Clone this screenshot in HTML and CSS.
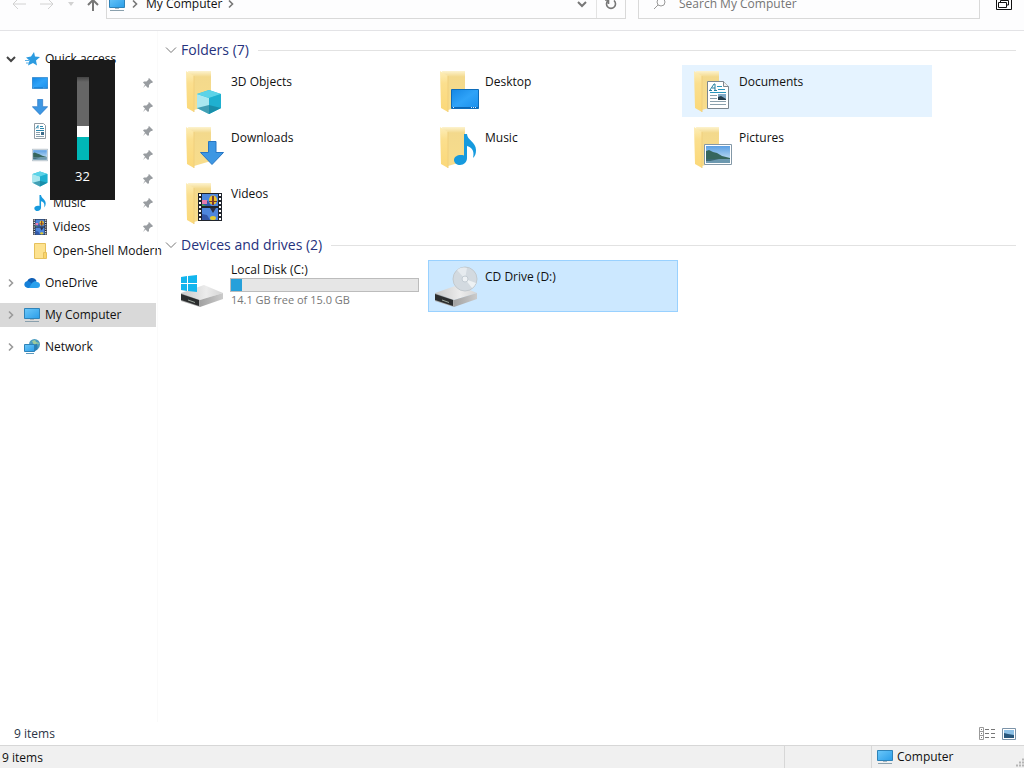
FILE: index.html
```html
<!DOCTYPE html>
<html lang="en">
 <head>
   <title>My Computer</title>
   <meta charset="utf-8"/>
   <link rel="stylesheet" href="styles.css">
 </head>

 <body>
   <!-- shared icons -->
   <svg class="sprite" aria-hidden="true">
      <defs>
         <linearGradient id="gScreen" x1="0" y1="0" x2="1" y2="1">
            <stop offset="0" stop-color="#6cc8fa"/><stop offset="1" stop-color="#2a9de8"/>
         </linearGradient>
         <linearGradient id="gBack" x1="0" y1="0" x2="0" y2="1">
            <stop offset="0" stop-color="#fdf3cf"/><stop offset="0.15" stop-color="#f3d98c"/><stop offset="1" stop-color="#f8dd8c"/>
         </linearGradient>
         <linearGradient id="gFlap" x1="0" y1="0" x2="0" y2="1">
            <stop offset="0" stop-color="#fdeeb9"/><stop offset="0.3" stop-color="#fbdf8e"/><stop offset="1" stop-color="#fbd878"/>
         </linearGradient>
         <linearGradient id="gDesk" x1="0" y1="0" x2="1" y2="1">
            <stop offset="0" stop-color="#1487e4"/><stop offset="0.5" stop-color="#2fa3f8"/><stop offset="1" stop-color="#1a8fec"/>
         </linearGradient>
         <linearGradient id="gTop" x1="0" y1="0" x2="1" y2="0">
            <stop offset="0" stop-color="#c9c9c9"/><stop offset="0.6" stop-color="#ececec"/><stop offset="1" stop-color="#d4d4d4"/>
         </linearGradient>
         <linearGradient id="gSide" x1="0" y1="0" x2="1" y2="0">
            <stop offset="0" stop-color="#a2a2a2"/><stop offset="1" stop-color="#cbcbcb"/>
         </linearGradient>
         <linearGradient id="gSky" x1="0" y1="0" x2="0" y2="1">
            <stop offset="0" stop-color="#5b9fe3"/><stop offset="1" stop-color="#d7ecf8"/>
         </linearGradient>
      </defs>
      <symbol id="folder" viewBox="0 0 48 48">
         <path d="M8 4h23v34l-17 5z" fill="url(#gBack)"/>
         <path d="M6 4l8 5v36l-7-4z" fill="url(#gFlap)"/>
         <path d="M14 9v36" stroke="#f0cf7c" fill="none"/>
      </symbol>
      <symbol id="cube" viewBox="0 0 26 24">
         <path d="M13 0l12 4v14l-12 6L1 18V4z" fill="#2cc0d8"/>
         <path d="M1 4l12 4v16L1 18z" fill="#a9e8f0"/>
         <path d="M13 0l12 4-12 4L1 4z" fill="#5cd3e8"/>
         <path d="M13 8l12-4v14l-12 6z" fill="#1fb0d0"/>
         <path d="M1 18l12-3 12 3-12 6z" fill="#17809a" opacity=".7"/>
      </symbol>
      <symbol id="arrow" viewBox="0 0 24 24">
         <path d="M8.500 .5h7.500v11h7.500L12 23.500 .5 11.500h8z" fill="#3d97e3" stroke="#2776c4"/>
      </symbol>
      <symbol id="film" viewBox="0 0 24 28">
         <path d="M0 0h24v28H0z" fill="#20242c"/>
         <path d="M4 1h16v12H4zM4 15h16v12H4z" fill="#4d86dc"/>
         <path d="M4 8h6l3 5H4zM4 21l5 1 3 5H4z" fill="#3358a8"/>
         <path d="M4 7h5v4H4z" fill="#e77cae"/>
         <ellipse cx="15" cy="7" rx="4" ry="4.500" fill="#edc32b"/><path d="M14 3h2v9h-2zM11 8h8v1h-8z" fill="#7b3a2c"/>
         <path d="M12 15h6l-3 5z" fill="#2c3047"/><ellipse cx="15" cy="25" rx="3" ry="2" fill="#e2ca32"/>
         <path d="M4 11l4 2H4z" fill="#46a846"/>
         <path d="M2 1v27M22 1v27" stroke="#fff" stroke-width="2" stroke-dasharray="2 2"/>
      </symbol>
      <symbol id="desk" viewBox="0 0 28 20">
         <path d="M.5 .5h27v19H.5z" fill="url(#gDesk)" stroke="#0d6cba"/>
         <path d="M1 18.500h26" stroke="#0b66b5"/><path d="M2 18.500h2M20 18.500h6" stroke="#d4edff" stroke-dasharray="1 1"/>
      </symbol>
      <symbol id="note" viewBox="0 0 22 31">
         <path d="M10 0h3c0 6 9 8 9 16 0 4-1 6-3 8 2-8-2-11-6-12v12c0 4-3 7-7 7-3 0-6-2-6-5s3-5 7-5c1 0 2 0 3 .5z" fill="#169ade"/>
      </symbol>
      <symbol id="doc" viewBox="0 0 22 28">
         <path d="M.5 .5h16l5 5v22H.5z" fill="#fff" stroke="#7b868f"/>
         <path d="M16.500 .5v5h5" fill="#eee" stroke="#7b868f"/>
         <path d="M3 9l4-6h1v6M5 7h3M2 9.500h3M7 9.500h3" stroke="#237fa0" fill="none"/>
         <path d="M10 5.500h5M11 8.500h7M3 11.500h16" stroke="#2995bc"/>
         <path d="M3 14.500h7M3 17.500h7M3 20.500h16M3 23.500h16" stroke="#8aa0ad"/>
         <path d="M11 13h8v6h-8z" fill="#7fa9c6"/><path d="M11 16l3-1 5 3v1h-8z" fill="#243d4c"/>
      </symbol>
      <symbol id="photo" viewBox="0 0 28 21">
         <path d="M.5 .5h27v20H.5z" fill="#fff" stroke="#8398a7"/>
         <path d="M2 2h24v17H2z" fill="url(#gSky)"/>
         <path d="M2 7l3-1 4 2 4 1 5 3 8 2v1H2z" fill="#36665d"/>
         <path d="M2 15h24v4H2z" fill="#6c98af"/><path d="M2 15l13 0-9 2H2z" fill="#3b6771"/>
      </symbol>
      <symbol id="pc" viewBox="0 0 16 16">
         <path d="M.5 1.500h15v10H.5z" fill="url(#gScreen)" stroke="#2f83b8"/>
         <path d="M6 12.500h4" stroke="#a7b6bf"/><path d="M1 14.500h14" stroke="#8aa0ad"/>
      </symbol>
      <symbol id="pin" viewBox="0 0 12 12">
         <path d="M7 1l4 4-1 1-1 0-2 2 0 2-1 1-2.500-2.500L1 11l2-3.500L1 5.500l1-1h2.500l2-2V1.500z" fill="#999da1"/>
      </symbol>
      <symbol id="chevR" viewBox="0 0 10 10"><path d="M3 1.500l3.500 3.500L3 8.500" fill="none" stroke="currentColor" stroke-width="1.600"/></symbol>
      <symbol id="chevD" viewBox="0 0 10 10"><path d="M1 3l4 4 4-4" fill="none" stroke="currentColor" stroke-width="2"/></symbol>
      <symbol id="thinD" viewBox="0 0 12 12"><path d="M1 3.500l5 5 5-5" fill="none" stroke="currentColor"/></symbol>
      <symbol id="drive" viewBox="0 0 48 48">
         <path d="M1 31l23-8 19 8-23 7z" fill="url(#gTop)"/>
         <path d="M20 38l23-7v6l-23 8z" fill="url(#gSide)"/>
         <path d="M1 31l19 7v7L1 39z" fill="#a9a9a9"/>
         <path d="M1 32l18 6v6L1 38z" fill="#2b2d2e"/>
         <path d="M8 38l7 2.500" stroke="#9aa59b"/>
      </symbol>
   </svg>

   <header class="toolbar">
      <div class="nav_btns">
         <button class="off" aria-label="Back"><svg width="14" height="12"><path d="M14 6H1M6 1L1 6l5 5" fill="none" stroke="currentColor"/></svg></button>
         <button class="off" aria-label="Forward"><svg width="14" height="12"><path d="M0 6h13M8 1l5 5-5 5" fill="none" stroke="currentColor"/></svg></button>
         <button class="off" aria-label="Recent locations"><svg width="6" height="4"><path d="M0 0h6L3 4z" fill="currentColor"/></svg></button>
         <button class="up" aria-label="Up"><svg width="12" height="13"><path d="M6 13V2M1 7l5-5 5 5" fill="none" stroke="currentColor" stroke-width="2"/></svg></button>
      </div>
      <div class="address">
         <svg class="ico16"><use href="#pc"/></svg>
         <svg class="chev"><use href="#chevR"/></svg>
         <a href="#">My Computer</a>
         <svg class="chev"><use href="#chevR"/></svg>
         <button class="drop" aria-label="Previous locations"><svg class="chev"><use href="#chevD"/></svg></button>
         <button class="refresh" aria-label="Refresh"><svg width="12" height="12"><path d="M3 2.500A4.500 4.500 0 1 0 9 2.500M3.500 6V2H0" fill="none" stroke="currentColor" stroke-width="1.600"/></svg></button>
      </div>
      <label class="search">
         <svg width="14" height="14"><circle cx="8" cy="5" r="4" fill="none" stroke="currentColor"/><path d="M5 8l-4 4" stroke="currentColor"/></svg>
         <input type="text" placeholder="Search My Computer" aria-label="Search My Computer">
      </label>
      <button class="restore" aria-label="Restore"><svg width="16" height="16"><path d="M.5 2v13.500h15V2M2.500 8.500h8v5h-8zM4.500 8V6.500h8V11h-2" fill="none" stroke="#111"/></svg></button>
   </header>

   <div class="wrap">
      <nav class="sidebar">
         <ul>
            <li><a href="#"><svg class="chev dark"><use href="#chevD"/></svg><svg class="ico16" viewBox="0 0 16 16"><path d="M10 1l1 4.500 5 .5-4 3.500 1 5-4-2.500-5 2.500 1.500-5L2 6.500l5-1z" fill="#2c9be0"/><path d="M1 9.500h4M2 12h3" stroke="#5bb0e6"/></svg>Quick access</a>
               <ul class="sub">
                  <li><a href="#" aria-label="Desktop"><svg class="ico16" viewBox="0 0 28 28"><use href="#desk" y="3" width="28" height="22"/></svg><svg class="pin"><use href="#pin"/></svg></a></li>
                  <li><a href="#" aria-label="Downloads"><svg class="ico16"><use href="#arrow"/></svg><svg class="pin"><use href="#pin"/></svg></a></li>
                  <li><a href="#" aria-label="Documents"><svg class="ico16" viewBox="0 0 16 16"><path d="M2.500 .5h9l2 2v13h-11z" fill="#fff" stroke="#8f9aa3"/><path d="M4 5.500l2-3v3M8 3.500h3M8 5.500h4M4 7.500h8" stroke="#2b86ad" fill="none"/><path d="M4 9.500h4M4 11.500h4M4 13.500h8" stroke="#8aa0ad"/><path d="M9 9h3v3H9z" fill="#3f6c8a"/></svg><svg class="pin"><use href="#pin"/></svg></a></li>
                  <li><a href="#" aria-label="Pictures"><svg class="ico16"><use href="#photo"/></svg><svg class="pin"><use href="#pin"/></svg></a></li>
                  <li><a href="#" aria-label="3D Objects"><svg class="ico16"><use href="#cube"/></svg><svg class="pin"><use href="#pin"/></svg></a></li>
                  <li><a href="#"><svg class="ico16"><use href="#note"/></svg>Music<svg class="pin"><use href="#pin"/></svg></a></li>
                  <li><a href="#"><svg class="ico16"><use href="#film"/></svg>Videos<svg class="pin"><use href="#pin"/></svg></a></li>
                  <li><a href="#"><svg class="ico16" viewBox="0 0 16 16"><path d="M2.500 .5h11v15h-11z" fill="#fde28f" stroke="#e6c15c"/><path d="M11.500 9.500h3v6h-3z" fill="#fbd56b" stroke="#e6c15c"/></svg>Open-Shell Modern</a></li>
               </ul>
            </li>
            <li><a href="#"><svg class="chev"><use href="#chevR"/></svg><svg class="ico16" viewBox="0 0 16 16"><path d="M3 7a5 5 0 0 1 9.500-1l-4 5z" fill="#0f5fb5"/><path d="M4 13a3.500 3.500 0 1 1 1-6.800L13 13z" fill="#1580d8"/><path d="M5 13l3-5c2-2 4-2 5-1 2 0 3 1.500 3 3 0 2-1 3-3 3z" fill="#2aa0ec"/></svg>OneDrive</a></li>
            <li class="on"><a href="#"><svg class="chev"><use href="#chevR"/></svg><svg class="ico16"><use href="#pc"/></svg>My Computer</a></li>
            <li><a href="#"><svg class="chev"><use href="#chevR"/></svg><svg class="ico16" viewBox="0 0 16 16"><circle cx="10.500" cy="5.500" r="5.500" fill="#4b9cc0"/><path d="M8 2l3-1 1 2 3 1-2 3-3-1z" fill="#9ecb9c"/><path d="M.5 5.500h10v7H.5z" fill="url(#gScreen)" stroke="#2f83b8"/><path d="M10.500 5.500l3-1v6l-3 2z" fill="#2b7fb4"/><path d="M2 14.500h8" stroke="#5b9abf"/></svg>Network</a></li>
         </ul>
      </nav>

      <main class="content">
         <section class="group">
            <h2><svg class="thin"><use href="#thinD"/></svg>Folders (7)</h2>
            <div class="tiles">
               <a class="tile" href="#"><svg class="ico48"><use href="#folder"/><use href="#cube" x="16" y="23" width="26" height="24"/></svg><span>3D Objects</span></a>
               <a class="tile" href="#"><svg class="ico48"><use href="#folder"/><use href="#desk" x="17" y="22" width="28" height="20"/></svg><span>Desktop</span></a>
               <a class="tile hover" href="#"><svg class="ico48"><use href="#folder"/><use href="#doc" x="19" y="14" width="22" height="28"/></svg><span>Documents</span></a>
               <a class="tile" href="#"><svg class="ico48"><use href="#folder"/><use href="#arrow" x="20" y="18" width="24" height="24"/></svg><span>Downloads</span></a>
               <a class="tile" href="#"><svg class="ico48"><use href="#folder"/><use href="#note" x="20" y="11" width="22" height="31"/></svg><span>Music</span></a>
               <a class="tile" href="#"><svg class="ico48"><use href="#folder"/><use href="#photo" x="16" y="21" width="28" height="21"/></svg><span>Pictures</span></a>
               <a class="tile" href="#"><svg class="ico48"><use href="#folder"/><use href="#film" x="18" y="14" width="24" height="28"/></svg><span>Videos</span></a>
            </div>
         </section>
         <section class="group">
            <h2><svg class="thin"><use href="#thinD"/></svg>Devices and drives (2)</h2>
            <div class="tiles">
               <a class="tile disk" href="#">
                  <svg class="ico48"><use href="#drive"/><path d="M1 15l6-1v7H1zM8 14l9-1v8H8zM1 22h6v7l-6-1zM8 22h9v8l-9-1z" fill="#12b5ee"/></svg>
                  <div class="info">
                     <span id="diskName">Local Disk (C:)</span>
                     <div class="bar" role="meter" aria-labelledby="diskName" aria-valuenow="6" aria-valuemin="0" aria-valuemax="100"><i style="width:6%"></i></div>
                     <small>14.1 GB free of 15.0 GB</small>
                  </div>
               </a>
               <a class="tile select" href="#"><svg class="ico48"><use href="#drive"/><circle cx="31" cy="17" r="12" fill="#d3dae0" stroke="#c2c9ce"/><path d="M31 17L23 8a12 12 0 0 1 10-2z" fill="#e6ebef"/><path d="M31 17l7 9a12 12 0 0 0 4-5z" fill="#eef2f4"/><circle cx="31" cy="17" r="3" fill="#eef2f5" stroke="#c3ccd3"/></svg><span>CD Drive (D:)</span></a>
            </div>
         </section>
      </main>
   </div>

   <div class="count">
      <span>9 items</span>
      <button aria-label="Details view"><svg width="16" height="13"><path d="M.5 .5h4v12h-4zM.5 4.500h4M.5 8.500h4" fill="none" stroke="#9a9a9a"/><path d="M2 2.500h1M2 6.500h1M2 10.500h1M6 2.500h4M12 2.500h4M6 6.500h4M12 6.500h4M6 10.500h4M12 10.500h4" stroke="#777"/></svg></button>
      <button aria-label="Large icons view"><svg width="14" height="12" viewBox="0 0 14 12"><path d="M.5 .5h13v11H.5z" fill="#fff" stroke="#7b93a8"/><path d="M2 2h10v8H2z" fill="#8cc0e6"/><path d="M2 5l4 1 6 1v3H2z" fill="#28577c"/></svg></button>
   </div>

   <footer class="status">
      <span class="left">9 items</span>
      <span class="mid"></span>
      <span class="zone"><svg class="ico16"><use href="#pc"/></svg>Computer</span>
      <svg class="grip" width="10" height="10"><path d="M8 1.500h2M5 4.500h2M8 4.500h2M2 7.500h2M5 7.500h2M8 7.500h2" stroke="#b5b5b5" stroke-width="2"/></svg>
   </footer>

   <!-- volume popup -->
   <div class="volume">
      <input type="range" id="vol" min="0" max="100" value="32" aria-label="Volume">
      <output for="vol">32</output>
   </div>
 </body>
</html>
```
FILE: styles.css
```css
/*####### reset #######*/
*{margin:0; padding:0; box-sizing:border-box;}
ul{list-style:none;}
a{color:inherit; text-decoration:none;}
button,input{font:inherit; color:inherit; border:0; background:none;}
svg{display:block; flex:none;}

body{display:flex; flex-direction:column; height:100vh; overflow:hidden; background-color:#fff; color:#111; font:12px/16px "Open Sans","Noto Sans",sans-serif;}
.sprite{position:absolute; width:0; height:0;}
.ico16{width:16px; height:16px;}
.ico48{width:48px; height:48px;}
.chev{width:10px; height:10px; color:#9a9a9a;}
.dark{color:#444;}

/*####### toolbar #######*/
.toolbar{display:flex; align-items:flex-end; flex:none; height:31px; padding:0 12px 11px; border-bottom:1px solid #e3e3e6; background-color:#fdfdfe;}
.nav_btns{display:flex; align-items:center; height:30px; width:94px; gap:14px; color:#777;}
.nav_btns .off{color:#d2d2d2;}
.nav_btns .up{margin-left:-1px;}
.address{display:flex; align-items:center; flex:1; height:30px; padding-left:2px; border:1px solid #d9d9d9;}
.address a{margin:0 6px;}
.address .chev{margin-left:5px; color:#777;}
.address a + .chev{margin-left:-2px;}
.address button{display:flex; align-items:center; justify-content:center; height:28px; width:29px; color:#777;}
.address .drop{margin-left:auto;}
.address .drop .chev{margin:0;}
.address .refresh{border-left:1px solid #e3e3e3;}
.search{display:flex; align-items:center; flex:0 1 342px; height:30px; margin-left:12px; padding-left:14px; gap:12px; border:1px solid #d9d9d9; color:#999;}
.search input{flex:1; min-width:0; outline:0;}
.search input::placeholder{color:#757575; opacity:1;}
.restore{height:34px; margin-left:16px;}

/*####### sidebar #######*/
.wrap{display:flex; flex:1; min-height:0;}
.sidebar{width:157px; flex:none; padding-top:16px;}
.sidebar a{display:flex; align-items:center; height:24px; padding-left:6px; white-space:nowrap;}
.sidebar .chev{margin-right:8px;}
.sidebar .ico16{margin-right:5px;}
.sidebar .sub a{padding-left:32px; padding-right:3px;}
.sidebar .pin{width:12px; height:12px; margin-left:auto;}
.sidebar > ul > li{margin-bottom:8px;}
.sidebar .on{margin-right:1px; background-color:#d9d9d9;}

/*####### content #######*/
.content{flex:1; padding:4px 8px 0 9px; border-left:1px solid #fafafa;}
.group{margin-bottom:1px;}
.group h2{display:flex; align-items:center; height:30px; color:#26327d; font-size:14px; font-weight:400;}
.group h2:after{content:""; flex:1; height:1px; margin-left:9px; background-color:#e2e2e2;}
.thin{width:12px; height:12px; margin:0 4px 0 -2px; color:#777;}
.tiles{display:grid; grid-template-columns:repeat(auto-fill,250px); gap:4px; padding-left:7px;}
.tile{display:flex; height:52px; padding:1px 4px 1px 5px; border:1px solid transparent;}
.tile > span{margin:7px 0 0 3px;}
.hover{background-color:#e5f3ff;}
.select{background-color:#cce8ff; border-color:#99d1ff;}
.info{flex:1; margin-left:2px;}
.info span,.info small{display:block; margin-left:1px;}
.info small{font-size:11px; color:#777;}
.bar{height:14px; border:1px solid #bcbcbc; background-color:#e6e6e6;}
.bar i{display:block; height:12px; background-color:#26a0da;}

/*####### bottom bars #######*/
.count{display:flex; align-items:center; flex:none; height:23px; padding:0 8px 0 14px; gap:7px; color:#2b3446;}
.count span{margin-right:auto;}
.status{display:flex; flex:none; height:23px; border-top:1px solid #d7d7d7; background-color:#f0f0f0; line-height:24px;}
.status .left{flex:1; padding-left:2px;}
.status .mid{width:87px; border-left:1px solid #d7d7d7;}
.status .zone{display:flex; align-items:center; width:143px; padding-left:5px; gap:4px; border-left:1px solid #d7d7d7;}
.status .grip{align-self:flex-end;}

/*####### volume #######*/
.volume{position:absolute; left:50px; top:60px; width:65px; height:140px; padding-top:17px; background-color:#1a1a1a; color:#fff; text-align:center;}
.volume input{display:block; width:12px; height:83px; margin:0 auto; appearance:none; writing-mode:vertical-lr; direction:rtl; background:linear-gradient(to top,#00b7b7 30px,#666 30px,#666 78px,#444);}
.volume input::-webkit-slider-thumb{appearance:none; width:12px; height:11px; background-color:#fff;}
.volume output{display:block; margin-top:8px; font-size:13px;}
```
